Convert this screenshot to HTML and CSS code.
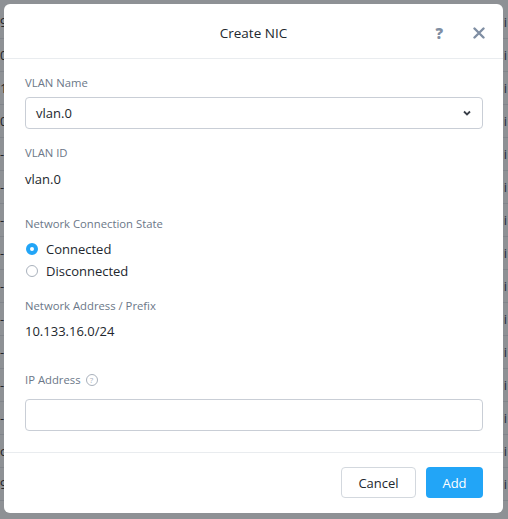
FILE: index.html
```html
<!DOCTYPE html>
<html>
<head>
<meta charset="utf-8">
<link rel="stylesheet" href="styles.css">
</head>
<body>
<div class="page">
  <div class="bg-row"><span class="l">9</span><span class="r">i</span></div>
  <div class="bg-row"><span class="l">0</span><span class="r">i</span></div>
  <div class="bg-row"><span class="l">1</span><span class="r">i</span></div>
  <div class="bg-row"><span class="l">0</span><span class="r">i</span></div>
  <div class="bg-row"><span class="l">-</span><span class="r">i</span></div>
  <div class="bg-row"><span class="l">-</span><span class="r">i</span></div>
  <div class="bg-row"><span class="l">-</span><span class="r">i</span></div>
  <div class="bg-row"><span class="l">-</span><span class="r">i</span></div>
  <div class="bg-row"><span class="l">-</span><span class="r">i</span></div>
  <div class="bg-row"><span class="l">-</span><span class="r">i</span></div>
  <div class="bg-row"><span class="l">-</span><span class="r">i</span></div>
  <div class="bg-row"><span class="l">-</span><span class="r">i</span></div>
  <div class="bg-row"><span class="l">-</span><span class="r">i</span></div>
  <div class="bg-row"><span class="l">o</span><span class="r">i</span></div>
  <div class="bg-row"><span class="l">9</span><span class="r">i</span></div>
</div>
<div class="overlay"></div>
<div class="modal">
  <div class="modal-header">
    <div class="title">Create NIC</div>
    <div class="header-actions">
      <span class="help">?</span>
      <svg class="close" width="12" height="12" viewBox="0 0 12 12"><path d="M1.5 1.5 L10.5 10.5 M10.5 1.5 L1.5 10.5" stroke="#7f8ea3" stroke-width="2.4" stroke-linecap="round"/></svg>
    </div>
  </div>
  <div class="modal-body">
    <div class="label">VLAN Name</div>
    <div class="select">
      <span>vlan.0</span>
      <svg width="8" height="6" viewBox="0 0 8 6"><path d="M1 1.5 L4 4.5 L7 1.5" stroke="#3a4049" stroke-width="1.8" fill="none"/></svg>
    </div>
    <div class="label l2">VLAN ID</div>
    <div class="value">vlan.0</div>
    <div class="label l3">Network Connection State</div>
    <div class="radios">
      <div class="radio-row"><span class="radio checked"></span>Connected</div>
      <div class="radio-row"><span class="radio"></span>Disconnected</div>
    </div>
    <div class="label l4">Network Address / Prefix</div>
    <div class="value">10.133.16.0/24</div>
    <div class="label l5">IP Address <span class="qmark">?</span></div>
    <div class="input"></div>
  </div>
  <div class="modal-footer">
    <button class="btn cancel">Cancel</button>
    <button class="btn add">Add</button>
  </div>
</div>
</body>
</html>
```
FILE: styles.css
```css
html, body {
  margin: 0;
  padding: 0;
  width: 508px;
  height: 519px;
  overflow: hidden;
  font-family: "Open Sans", "Lato", sans-serif;
}
.page {
  position: absolute;
  inset: 0;
  background: #fff;
  padding-top: 6px;
}
.bg-row {
  height: 32px;
  border-bottom: 1px solid #e4e7ea;
  display: flex;
  justify-content: space-between;
  align-items: center;
  font-size: 13px;
  color: #222;
}
.bg-row .l { margin-left: 0; }
.bg-row .r { margin-right: 1px; color: #2a3550; }
.overlay {
  position: absolute;
  inset: 0;
  background: rgba(30, 36, 44, 0.5);
}
.modal {
  position: absolute;
  left: 4px;
  top: 4px;
  width: 499px;
  height: 509px;
  background: #fff;
  border-radius: 6px;
  display: flex;
  flex-direction: column;
}
.modal-header {
  height: 54px;
  border-bottom: 1px solid #e9ecef;
  display: flex;
  align-items: center;
  justify-content: center;
  position: relative;
}
.title {
  font-size: 13.5px;
  color: #22272e;
  padding-top: 3px;
}
.header-actions {
  position: absolute;
  right: 18px;
  top: 21px;
  display: flex;
  align-items: center;
  gap: 30px;
}
.help {
  font-size: 15px;
  font-weight: 800;
  color: #7f8ea3;
  line-height: 16px;
}
.modal-body {
  flex: 1;
  padding: 17px 20px 0 21px;
}
.label {
  font-size: 11.3px;
  line-height: 14px;
  color: #6b7788;
}
.select, .input {
  margin-top: 7px;
  height: 30px;
  border: 1px solid #c9ced6;
  border-radius: 4px;
}
.select {
  display: flex;
  align-items: center;
  justify-content: space-between;
  padding: 0 11px 0 10px;
  font-size: 13px;
  color: #22272e;
}
.l2 { margin-top: 17px; }
.value {
  margin-top: 11px;
  font-size: 13px;
  line-height: 16px;
  color: #22272e;
}
.l3 { margin-top: 30px; }
.radios { margin-top: 7px; }
.radio-row {
  height: 22px;
  display: flex;
  align-items: center;
  font-size: 13px;
  color: #22272e;
}
.radio {
  box-sizing: border-box;
  width: 12px;
  height: 12px;
  border-radius: 50%;
  border: 1px solid #a9b1bc;
  margin-right: 8px;
  margin-left: 1px;
}
.radio.checked {
  border: 4px solid #22a5f7;
  background: #fff;
}
.l4 { margin-top: 17px; }
.l4 + .value { margin-top: 10px; }
.l5 {
  margin-top: 34px;
  display: flex;
  align-items: center;
  gap: 5px;
}
.qmark {
  box-sizing: border-box;
  width: 12px;
  height: 12px;
  border: 1px solid #a9b1bc;
  border-radius: 50%;
  font-size: 8px;
  line-height: 10px;
  text-align: center;
  color: #a9b1bc;
}
.input { margin-top: 12px; }
.modal-footer {
  height: 61px;
  border-top: 1px solid #e9ecef;
  display: flex;
  justify-content: flex-end;
  align-items: flex-start;
  padding: 14px 20px 0 0;
  box-sizing: border-box;
  gap: 10px;
}
.btn {
  height: 31px;
  border-radius: 4px;
  font-family: inherit;
  font-size: 13px;
  padding: 0;
}
.cancel {
  width: 75px;
  background: #fff;
  border: 1px solid #d3d8de;
  color: #22272e;
}
.add {
  width: 57px;
  background: #22a5f7;
  border: none;
  color: #fff;
}
```
